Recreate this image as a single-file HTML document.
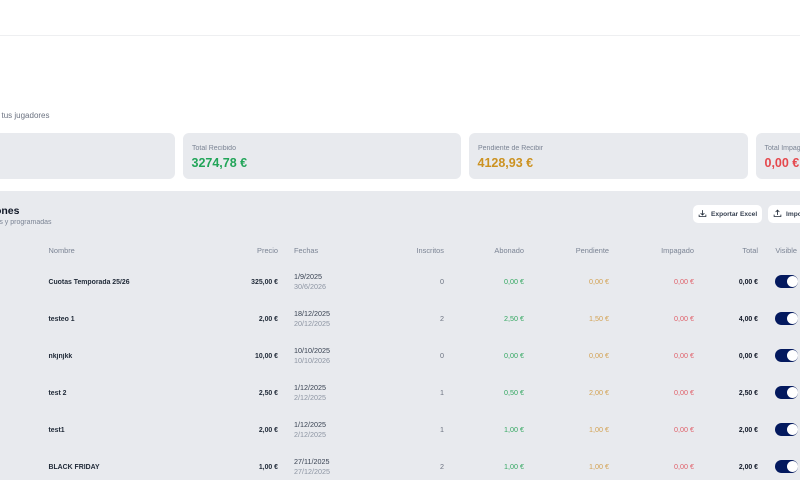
<!DOCTYPE html>
<html lang="es">
<head>
<meta charset="utf-8">
<title>Cuotas</title>
<style>
html,body{margin:0;padding:0;width:800px;height:480px;overflow:hidden;background:#fff}
body{position:relative;font-family:"Liberation Sans",sans-serif;color:#1f2937}
.a{position:absolute;white-space:nowrap;line-height:1;filter:blur(.25px)}
.topline{position:absolute;left:0;top:35px;width:800px;height:1px;background:#eeeff1}
.card{position:absolute;top:133px;height:46px;background:#e8eaee;border-radius:6px}
.panel{position:absolute;left:0;top:191px;width:800px;height:289px;background:#e8eaee}
.lbl{font-size:7px;color:#7b8494;top:145px}
.big{font-size:12.5px;font-weight:700;top:157px}
.h{font-size:7.4px;color:#7b8494;top:247px}
.r{text-align:right;transform:translateX(-100%)}
.c{font-size:7.2px}
.n{font-size:6.9px;font-weight:700;color:#1f2937;margin-top:1.5px}
.btn{position:absolute;top:205px;height:18px;background:#fff;border-radius:5px}
.btxt{font-size:6.6px;font-weight:700;color:#374151;top:212px}
.t{position:absolute;left:775px;width:23px;height:12.5px;background:#03195e;border-radius:7px}
.t i{position:absolute;right:.5px;top:.75px;width:11px;height:11px;background:#fff;border-radius:50%}
</style>
</head>
<body>
<div class="topline"></div>
<div class="a r" style="left:49.5px;top:112px;font-size:8px;color:#6b7280">tus jugadores</div>

<div class="card" style="left:-20px;width:195px"></div>
<div class="card" style="left:183px;width:278px"></div>
<div class="card" style="left:469px;width:279px"></div>
<div class="card" style="left:756px;width:80px"></div>

<div class="a lbl" style="left:192px">Total Recibido</div>
<div class="a big" style="left:191.5px;color:#22a559">3274,78 €</div>
<div class="a lbl" style="left:478px">Pendiente de Recibir</div>
<div class="a big" style="left:477.5px;color:#cc9221">4128,93 €</div>
<div class="a lbl" style="left:764.5px">Total Impagado</div>
<div class="a big" style="left:764.5px;color:#e5484d">0,00 €</div>

<div class="panel"></div>
<div class="a r" style="left:19.5px;top:206px;font-size:10.5px;font-weight:700;color:#111827">ones</div>
<div class="a r" style="left:51.5px;top:219px;font-size:7px;color:#7b8494">s y programadas</div>

<div class="btn" style="left:693px;width:69px"></div>
<svg class="a" style="left:698px;top:209px" width="9" height="9" viewBox="0 0 24 24" fill="none" stroke="#1f2937" stroke-width="2.2"><path d="M3 15v5h18v-5M12 3v12M7 11l5 5 5-5"/></svg>
<div class="a btxt" style="left:711px">Exportar Excel</div>
<div class="btn" style="left:768px;width:60px"></div>
<svg class="a" style="left:773px;top:209px" width="9" height="9" viewBox="0 0 24 24" fill="none" stroke="#1f2937" stroke-width="2.2"><path d="M3 15v5h18v-5M12 16V4M7 8l5-5 5 5"/></svg>
<div class="a btxt" style="left:786px">Importar</div>

<div class="a h" style="left:48.5px">Nombre</div>
<div class="a h r" style="left:278px">Precio</div>
<div class="a h" style="left:294px">Fechas</div>
<div class="a h r" style="left:444px">Inscritos</div>
<div class="a h r" style="left:524px">Abonado</div>
<div class="a h r" style="left:609px">Pendiente</div>
<div class="a h r" style="left:694px">Impagado</div>
<div class="a h r" style="left:758px">Total</div>
<div class="a h r" style="left:797px">Visible</div>

<div class="a n" style="left:48.5px;top:278px">Cuotas Temporada 25/26</div>
<div class="a n r" style="left:278px;top:278px">325,00 €</div>
<div class="a c" style="left:294px;top:272.5px;color:#374151">1/9/2025</div>
<div class="a c" style="left:294px;top:283px;color:#8d95a3">30/6/2026</div>
<div class="a c r" style="left:444px;top:278px;color:#6b7280">0</div>
<div class="a c r" style="left:524px;top:278px;color:#35a862">0,00 €</div>
<div class="a c r" style="left:609px;top:278px;color:#d3a253">0,00 €</div>
<div class="a c r" style="left:694px;top:278px;color:#e0606a">0,00 €</div>
<div class="a n r" style="left:758px;top:278px;color:#111827">0,00 €</div>
<div class="t" style="top:275.3px"><i></i></div>

<div class="a n" style="left:48.5px;top:315px">testeo 1</div>
<div class="a n r" style="left:278px;top:315px">2,00 €</div>
<div class="a c" style="left:294px;top:309.5px;color:#374151">18/12/2025</div>
<div class="a c" style="left:294px;top:320px;color:#8d95a3">20/12/2025</div>
<div class="a c r" style="left:444px;top:315px;color:#6b7280">2</div>
<div class="a c r" style="left:524px;top:315px;color:#35a862">2,50 €</div>
<div class="a c r" style="left:609px;top:315px;color:#d3a253">1,50 €</div>
<div class="a c r" style="left:694px;top:315px;color:#e0606a">0,00 €</div>
<div class="a n r" style="left:758px;top:315px;color:#111827">4,00 €</div>
<div class="t" style="top:312.3px"><i></i></div>

<div class="a n" style="left:48.5px;top:352px">nkjnjkk</div>
<div class="a n r" style="left:278px;top:352px">10,00 €</div>
<div class="a c" style="left:294px;top:346.5px;color:#374151">10/10/2025</div>
<div class="a c" style="left:294px;top:357px;color:#8d95a3">10/10/2026</div>
<div class="a c r" style="left:444px;top:352px;color:#6b7280">0</div>
<div class="a c r" style="left:524px;top:352px;color:#35a862">0,00 €</div>
<div class="a c r" style="left:609px;top:352px;color:#d3a253">0,00 €</div>
<div class="a c r" style="left:694px;top:352px;color:#e0606a">0,00 €</div>
<div class="a n r" style="left:758px;top:352px;color:#111827">0,00 €</div>
<div class="t" style="top:349.3px"><i></i></div>

<div class="a n" style="left:48.5px;top:389px">test 2</div>
<div class="a n r" style="left:278px;top:389px">2,50 €</div>
<div class="a c" style="left:294px;top:383.5px;color:#374151">1/12/2025</div>
<div class="a c" style="left:294px;top:394px;color:#8d95a3">2/12/2025</div>
<div class="a c r" style="left:444px;top:389px;color:#6b7280">1</div>
<div class="a c r" style="left:524px;top:389px;color:#35a862">0,50 €</div>
<div class="a c r" style="left:609px;top:389px;color:#d3a253">2,00 €</div>
<div class="a c r" style="left:694px;top:389px;color:#e0606a">0,00 €</div>
<div class="a n r" style="left:758px;top:389px;color:#111827">2,50 €</div>
<div class="t" style="top:386.3px"><i></i></div>

<div class="a n" style="left:48.5px;top:426px">test1</div>
<div class="a n r" style="left:278px;top:426px">2,00 €</div>
<div class="a c" style="left:294px;top:420.5px;color:#374151">1/12/2025</div>
<div class="a c" style="left:294px;top:431px;color:#8d95a3">2/12/2025</div>
<div class="a c r" style="left:444px;top:426px;color:#6b7280">1</div>
<div class="a c r" style="left:524px;top:426px;color:#35a862">1,00 €</div>
<div class="a c r" style="left:609px;top:426px;color:#d3a253">1,00 €</div>
<div class="a c r" style="left:694px;top:426px;color:#e0606a">0,00 €</div>
<div class="a n r" style="left:758px;top:426px;color:#111827">2,00 €</div>
<div class="t" style="top:423.3px"><i></i></div>

<div class="a n" style="left:48.5px;top:463px">BLACK FRIDAY</div>
<div class="a n r" style="left:278px;top:463px">1,00 €</div>
<div class="a c" style="left:294px;top:457.5px;color:#374151">27/11/2025</div>
<div class="a c" style="left:294px;top:468px;color:#8d95a3">27/12/2025</div>
<div class="a c r" style="left:444px;top:463px;color:#6b7280">2</div>
<div class="a c r" style="left:524px;top:463px;color:#35a862">1,00 €</div>
<div class="a c r" style="left:609px;top:463px;color:#d3a253">1,00 €</div>
<div class="a c r" style="left:694px;top:463px;color:#e0606a">0,00 €</div>
<div class="a n r" style="left:758px;top:463px;color:#111827">2,00 €</div>
<div class="t" style="top:460.3px"><i></i></div>
</body>
</html>
